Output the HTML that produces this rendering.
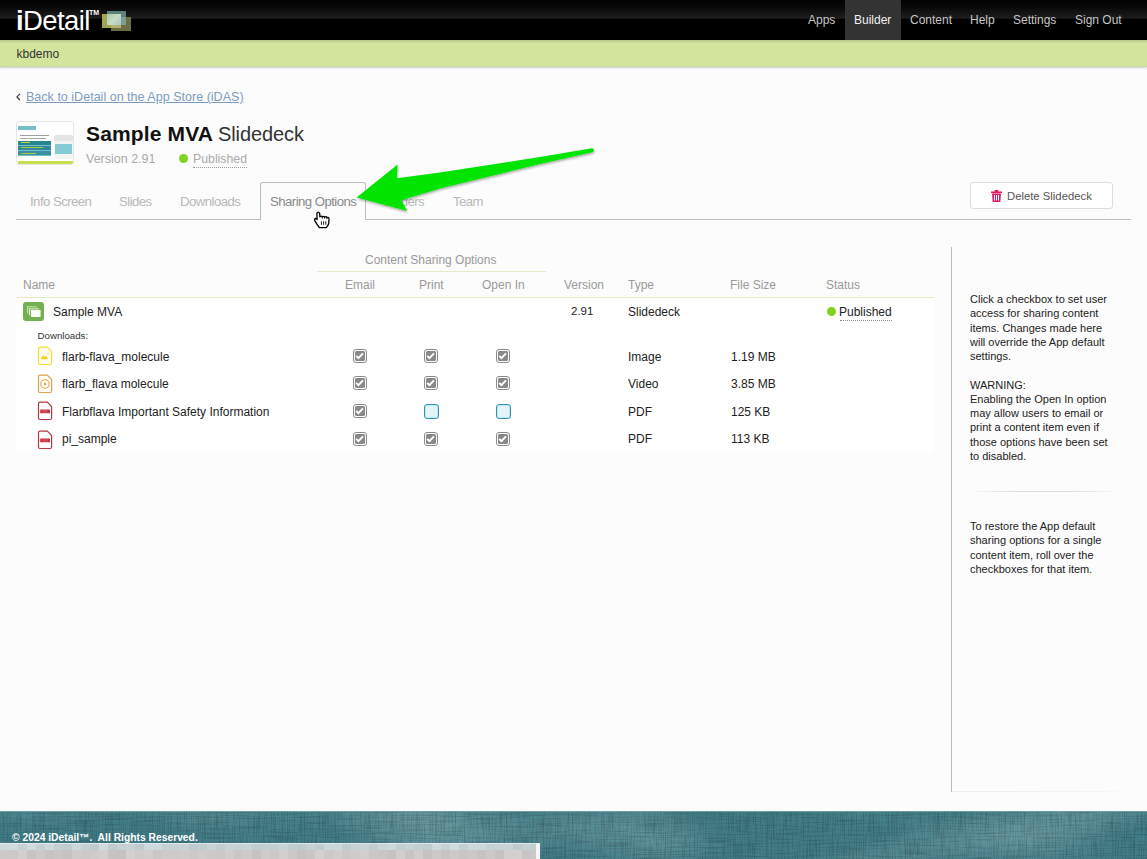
<!DOCTYPE html>
<html><head><meta charset="utf-8">
<style>
*{margin:0;padding:0;box-sizing:border-box}
html,body{width:1147px;height:859px;overflow:hidden}
body{position:relative;background:#fcfcfc;font-family:"Liberation Sans",sans-serif;color:#222}
.a{position:absolute}
.t{position:absolute;white-space:nowrap;line-height:1;font-size:12px}
#hdr{left:0;top:0;width:1147px;height:40px;background:linear-gradient(#020202 0px,#0a0a0a 8px,#1d1d1d 18px,#000 19.5px,#000 40px)}
.nav{color:#c6c6c6;top:14px}
#green{left:0;top:40px;width:1147px;height:27px;background:linear-gradient(#b5c585 0px,#c8da95 2px,#d3e59d 4px,#d3e59d 25.5px,#c5d2a0 27px);box-shadow:0 1px 2px rgba(0,0,0,.18)}
.tab{color:#b8b8b8;top:195px;font-size:13.2px !important;letter-spacing:-0.55px}
.th{color:#9a9a9a;top:279px}
.cb{position:absolute;width:14px;height:14px}
.cb svg{position:absolute;left:0;top:0}
.cb::before{content:"";position:absolute;left:0;top:0;width:14px;height:14px;box-sizing:border-box;border:1.3px solid #8c8c8c;border-radius:3px;background:#fff}
.cbu{position:absolute;width:14.8px;height:14.8px;border:1.1px solid #3f8fab;border-radius:3px;background:#e3f5fb;box-shadow:inset 0 0 0 1px #b3ecfc}
.side{position:absolute;left:970px;font-size:11px;line-height:14.25px;color:#222;white-space:nowrap}
</style></head><body>

<!-- header -->
<div id="hdr" class="a"></div>
<div class="t" style="left:16px;top:6.5px;font-size:27.5px;color:#fff;letter-spacing:-0.6px"><b>i</b>Detail</div>
<div class="t" style="left:89px;top:9px;font-size:7px;font-weight:bold;color:#fff">TM</div>
<div class="a" style="left:101px;top:10px;width:31px;height:22px;filter:blur(0.5px)">
  <div class="a" style="left:5.5px;top:0.8px;width:19.6px;height:14.4px;background:#5f8079"></div>
  <div class="a" style="left:10.4px;top:6.5px;width:19.6px;height:14.6px;background:#6d6d45"></div>
  <div class="a" style="left:0.8px;top:3.6px;width:19.2px;height:14.4px;background:#a3a553"></div>
  <div class="a" style="left:5.5px;top:3.6px;width:14.5px;height:11.6px;background:linear-gradient(135deg,#a8c8b0,#c8dcc4 50%,#a8c8c0)"></div>
  <div class="a" style="left:20px;top:6.5px;width:5.1px;height:8.7px;background:#7c9c94"></div>
  <div class="a" style="left:10.4px;top:15.2px;width:9.6px;height:2.8px;background:#b4b470"></div>
</div>

<div class="a" style="left:845px;top:0;width:56px;height:40px;background:#333"></div>
<div class="t nav" style="left:808px">Apps</div>
<div class="t nav" style="left:854px;color:#f2f2f2">Builder</div>
<div class="t nav" style="left:910px">Content</div>
<div class="t nav" style="left:970px">Help</div>
<div class="t nav" style="left:1013px">Settings</div>
<div class="t nav" style="left:1075px">Sign Out</div>

<div id="green" class="a"></div>
<div class="t" style="left:16.5px;top:48px;color:#333">kbdemo</div>

<!-- back link -->
<svg class="a" style="left:15px;top:92px" width="8" height="10" viewBox="0 0 8 10"><path d="M4.9 1.8 L1.9 4.9 L4.9 8" fill="none" stroke="#333" stroke-width="1.15"/></svg>
<div class="t" style="left:26px;top:91px;font-size:12.55px;color:#7c9dbf;text-decoration:underline">Back to iDetail on the App Store (iDAS)</div>

<!-- title -->
<div class="a" style="left:16px;top:121px;width:58px;height:44px;border:1px solid #e6e6e6;border-radius:3px;background:#fff;overflow:hidden">
  <div class="a" style="left:1px;top:4px;width:18px;height:4px;background:#74c0c8"></div>
  <div class="a" style="left:3px;top:13px;width:29px;height:1.3px;background:#555;opacity:.55"></div>
  <div class="a" style="left:3px;top:15.6px;width:26px;height:1.3px;background:#555;opacity:.5"></div>
  <div class="a" style="left:1px;top:19px;width:33px;height:15px;background:#72bfcc"></div>
  <div class="a" style="left:1px;top:19px;width:33px;height:3.6px;background:#2a8593"></div>
  <div class="a" style="left:1px;top:24.2px;width:33px;height:3.4px;background:#31899a"></div>
  <div class="a" style="left:1px;top:29.4px;width:33px;height:3.6px;background:#3a90a2"></div>
  <div class="a" style="left:4px;top:20.2px;width:9px;height:1.2px;background:#b8d840"></div>
  <div class="a" style="left:4px;top:25.3px;width:22px;height:1.2px;background:#a8c840"></div>
  <div class="a" style="left:4px;top:30.6px;width:15px;height:1.2px;background:#a8c840"></div>
  <div class="a" style="left:37px;top:13px;width:19px;height:6px;background:#e4e4e4;border-radius:2px 2px 0 0"></div>
  <div class="a" style="left:37px;top:19px;width:19px;height:18px;background:#f2f4f4;border-radius:0 0 2px 2px"></div>
  <div class="a" style="left:38px;top:22px;width:17px;height:10px;background:#86cad3"></div>
  <div class="a" style="left:1px;top:39px;width:56px;height:3px;background:#c8e050"></div>
</div>
<div class="t" style="left:86px;top:123px;font-size:21px;font-weight:bold;color:#111;letter-spacing:0.15px">Sample MVA</div>
<div class="t" style="left:218px;top:124px;font-size:20px;color:#333;letter-spacing:-0.1px">Slidedeck</div>
<div class="t" style="left:86px;top:153px;font-size:12.5px;color:#aaa">Version 2.91</div>
<div class="a" style="left:179px;top:154px;width:9px;height:9px;border-radius:50%;background:#7ed321"></div>
<div class="t" style="left:193px;top:153px;font-size:12.3px;color:#aaa">Published</div>
<div class="a" style="left:193px;top:167px;width:54px;height:0;border-top:1px dotted #999"></div>

<!-- tabs -->
<div class="a" style="left:16px;top:219px;width:1115px;height:1px;background:#bdbdbd"></div>
<div class="a" style="left:260px;top:182px;width:106px;height:38px;border:1px solid #bdbdbd;border-bottom:none;border-radius:3px 3px 0 0;background:#fcfcfc"></div>
<div class="t tab" style="left:30px">Info Screen</div>
<div class="t tab" style="left:119px">Slides</div>
<div class="t tab" style="left:180px">Downloads</div>
<div class="t tab" style="left:270px;color:#8a8a8a">Sharing Options</div>
<div class="t tab" style="left:384px">Folders</div>
<div class="t tab" style="left:453px">Team</div>

<!-- delete button -->
<div class="a" style="left:970px;top:182px;width:143px;height:27px;border:1px solid #dcdcdc;border-radius:3px;background:#fff"></div>
<svg class="a" style="left:991px;top:190px" width="11" height="12" viewBox="0 0 11 12">
  <rect x="0" y="1.5" width="11" height="1.6" fill="#e5195e"/>
  <rect x="3.5" y="0" width="4" height="2" rx="0.8" fill="#e5195e"/>
  <path d="M1 3.5 H10 L9.3 12 H1.7 Z" fill="#e5195e"/>
  <rect x="3" y="5" width="1" height="5.5" fill="#fff"/>
  <rect x="5" y="5" width="1" height="5.5" fill="#fff"/>
  <rect x="7" y="5" width="1" height="5.5" fill="#fff"/>
</svg>
<div class="t" style="left:1007px;top:191px;font-size:11.3px;color:#555">Delete Slidedeck</div>

<!-- table -->
<div class="a" style="left:16px;top:297px;width:918px;height:155px;background:#fff"></div>
<div class="t" style="left:365px;top:254px;color:#9a9a9a">Content Sharing Options</div>
<div class="a" style="left:317px;top:271px;width:229px;height:1px;background:#e3eac5"></div>
<div class="t th" style="left:23px">Name</div>
<div class="t th" style="left:345px">Email</div>
<div class="t th" style="left:419px">Print</div>
<div class="t th" style="left:482px">Open In</div>
<div class="t th" style="left:564px">Version</div>
<div class="t th" style="left:628px">Type</div>
<div class="t th" style="left:730px">File Size</div>
<div class="t th" style="left:826px">Status</div>
<div class="a" style="left:16px;top:297px;width:918px;height:1px;background:#e3eac5"></div>

<!-- sample mva row -->
<svg class="a" style="left:23px;top:302px" width="21" height="19" viewBox="0 0 21 19">
  <rect x="0" y="0" width="21" height="19" rx="3" fill="#73b04f"/>
  <path d="M4.6 11.2 V4.8 H13.9" fill="none" stroke="#c4e4b0" stroke-width="1.1"/>
  <path d="M6.5 13.2 V6.7 H15.8" fill="none" stroke="#dcf2cc" stroke-width="1.1"/>
  <rect x="7.9" y="7.9" width="9.7" height="7.1" fill="#fbfff6"/>
</svg>
<div class="t" style="left:53px;top:306px">Sample MVA</div>
<div class="t" style="left:571px;top:306px;font-size:11.5px">2.91</div>
<div class="t" style="left:628px;top:306px">Slidedeck</div>
<div class="a" style="left:827px;top:307px;width:9px;height:9px;border-radius:50%;background:#7ed321"></div>
<div class="t" style="left:839px;top:306px">Published</div>
<div class="a" style="left:840px;top:320px;width:52px;height:0;border-top:1px dotted #888"></div>
<div class="t" style="left:37.5px;top:331px;font-size:9.7px;color:#333">Downloads:</div>

<!-- download rows -->
<svg class="a" style="left:37px;top:346px" width="16" height="20" viewBox="0 0 16 20">
  <path d="M1.5 2.7 Q1.5 1.2 3 1.2 H10.3 L14.6 5.5 V17 Q14.6 18.5 13.1 18.5 H3 Q1.5 18.5 1.5 17 Z" fill="#fffef4" stroke="#f3df2c" stroke-width="1.2"/>
  <path d="M3.6 13.2 L6.2 9 L7.7 10.8 L9 9.6 L11 13.2 Z" fill="#efd21c"/>
  <circle cx="11" cy="7.6" r="0.8" fill="#efd21c"/>
</svg>
<svg class="a" style="left:37px;top:374.4px" width="16" height="20" viewBox="0 0 16 20">
  <path d="M1.5 2.7 Q1.5 1.2 3 1.2 H10.3 L14.6 5.5 V17 Q14.6 18.5 13.1 18.5 H3 Q1.5 18.5 1.5 17 Z" fill="#fffdf8" stroke="#e2a04c" stroke-width="1.2"/>
  <circle cx="8" cy="10" r="4.2" fill="none" stroke="#e2a04c" stroke-width="1.1"/>
  <path d="M7 8.2 L9.8 10 L7 11.8 Z" fill="#e2a04c"/>
</svg>
<svg class="a" style="left:37px;top:401.4px" width="16" height="20" viewBox="0 0 16 20">
  <path d="M1.5 2.7 Q1.5 1.2 3 1.2 H10.3 L14.6 5.5 V17 Q14.6 18.5 13.1 18.5 H3 Q1.5 18.5 1.5 17 Z" fill="#fff" stroke="#b73744" stroke-width="1.2"/>
  <rect x="3.2" y="8.6" width="9.8" height="3.6" rx="0.5" fill="#c9303e"/>
  <path d="M5.3 9.8 H10.8 M5.3 11.1 H10.8" stroke="#e07a84" stroke-width="0.5"/>
</svg>
<svg class="a" style="left:37px;top:429.6px" width="16" height="20" viewBox="0 0 16 20">
  <path d="M1.5 2.7 Q1.5 1.2 3 1.2 H10.3 L14.6 5.5 V17 Q14.6 18.5 13.1 18.5 H3 Q1.5 18.5 1.5 17 Z" fill="#fff" stroke="#b73744" stroke-width="1.2"/>
  <rect x="3.2" y="8.6" width="9.8" height="3.6" rx="0.5" fill="#c9303e"/>
  <path d="M5.3 9.8 H10.8 M5.3 11.1 H10.8" stroke="#e07a84" stroke-width="0.5"/>
</svg>

<div class="t" style="left:62px;top:351px">flarb-flava_molecule</div>
<div class="t" style="left:62px;top:378px">flarb_flava molecule</div>
<div class="t" style="left:62px;top:406px">Flarbflava Important Safety Information</div>
<div class="t" style="left:62px;top:433px">pi_sample</div>

<div class="t" style="left:628px;top:351px">Image</div>
<div class="t" style="left:628px;top:378px">Video</div>
<div class="t" style="left:628px;top:406px">PDF</div>
<div class="t" style="left:628px;top:433px">PDF</div>
<div class="t" style="left:731px;top:351px">1.19 MB</div>
<div class="t" style="left:731px;top:378px">3.85 MB</div>
<div class="t" style="left:731px;top:406px">125 KB</div>
<div class="t" style="left:731px;top:433px">113 KB</div>

<!-- checkboxes -->
<div class="cb" style="left:353.2px;top:349.1px"><svg width="14" height="14" viewBox="0 0 14 14"><rect x="1.95" y="1.95" width="10.1" height="10.1" rx="1.6" fill="#8a8a8a"/><path d="M3.2 6.9 L5.4 9.1 L10 4.4" fill="none" stroke="#fff" stroke-width="1.9"/></svg></div>
<div class="cb" style="left:424.3px;top:349.1px"><svg width="14" height="14" viewBox="0 0 14 14"><rect x="1.95" y="1.95" width="10.1" height="10.1" rx="1.6" fill="#8a8a8a"/><path d="M3.2 6.9 L5.4 9.1 L10 4.4" fill="none" stroke="#fff" stroke-width="1.9"/></svg></div>
<div class="cb" style="left:496.2px;top:349.1px"><svg width="14" height="14" viewBox="0 0 14 14"><rect x="1.95" y="1.95" width="10.1" height="10.1" rx="1.6" fill="#8a8a8a"/><path d="M3.2 6.9 L5.4 9.1 L10 4.4" fill="none" stroke="#fff" stroke-width="1.9"/></svg></div>
<div class="cb" style="left:353.2px;top:376.1px"><svg width="14" height="14" viewBox="0 0 14 14"><rect x="1.95" y="1.95" width="10.1" height="10.1" rx="1.6" fill="#8a8a8a"/><path d="M3.2 6.9 L5.4 9.1 L10 4.4" fill="none" stroke="#fff" stroke-width="1.9"/></svg></div>
<div class="cb" style="left:424.3px;top:376.1px"><svg width="14" height="14" viewBox="0 0 14 14"><rect x="1.95" y="1.95" width="10.1" height="10.1" rx="1.6" fill="#8a8a8a"/><path d="M3.2 6.9 L5.4 9.1 L10 4.4" fill="none" stroke="#fff" stroke-width="1.9"/></svg></div>
<div class="cb" style="left:496.2px;top:376.1px"><svg width="14" height="14" viewBox="0 0 14 14"><rect x="1.95" y="1.95" width="10.1" height="10.1" rx="1.6" fill="#8a8a8a"/><path d="M3.2 6.9 L5.4 9.1 L10 4.4" fill="none" stroke="#fff" stroke-width="1.9"/></svg></div>
<div class="cb" style="left:353.2px;top:404.0px"><svg width="14" height="14" viewBox="0 0 14 14"><rect x="1.95" y="1.95" width="10.1" height="10.1" rx="1.6" fill="#8a8a8a"/><path d="M3.2 6.9 L5.4 9.1 L10 4.4" fill="none" stroke="#fff" stroke-width="1.9"/></svg></div>
<div class="cbu" style="left:424.3px;top:404.0px"></div>
<div class="cbu" style="left:496.2px;top:404.0px"></div>
<div class="cb" style="left:353.2px;top:432.1px"><svg width="14" height="14" viewBox="0 0 14 14"><rect x="1.95" y="1.95" width="10.1" height="10.1" rx="1.6" fill="#8a8a8a"/><path d="M3.2 6.9 L5.4 9.1 L10 4.4" fill="none" stroke="#fff" stroke-width="1.9"/></svg></div>
<div class="cb" style="left:424.3px;top:432.1px"><svg width="14" height="14" viewBox="0 0 14 14"><rect x="1.95" y="1.95" width="10.1" height="10.1" rx="1.6" fill="#8a8a8a"/><path d="M3.2 6.9 L5.4 9.1 L10 4.4" fill="none" stroke="#fff" stroke-width="1.9"/></svg></div>
<div class="cb" style="left:496.2px;top:432.1px"><svg width="14" height="14" viewBox="0 0 14 14"><rect x="1.95" y="1.95" width="10.1" height="10.1" rx="1.6" fill="#8a8a8a"/><path d="M3.2 6.9 L5.4 9.1 L10 4.4" fill="none" stroke="#fff" stroke-width="1.9"/></svg></div>

<!-- sidebar -->
<div class="a" style="left:951px;top:247px;width:1px;height:545px;background:#bdbdbd"></div>
<div class="a" style="left:952px;top:791px;width:180px;height:1px;background:linear-gradient(90deg,#eee,#f4f4f4 80%,rgba(250,250,250,0))"></div>
<div class="side" style="top:292px">Click a checkbox to set user<br>access for sharing content<br>items. Changes made here<br>will override the App default<br>settings.<br><br>WARNING:<br>Enabling the Open In option<br>may allow users to email or<br>print a content item even if<br>those options have been set<br>to disabled.</div>
<div class="a" style="left:968px;top:491px;width:152px;height:1px;background:linear-gradient(90deg,rgba(220,220,220,0),#dedede 30%,#dedede 70%,rgba(220,220,220,0))"></div>
<div class="side" style="top:519px">To restore the App default<br>sharing options for a single<br>content item, roll over the<br>checkboxes for that item.</div>

<!-- arrow -->
<svg class="a" style="left:0;top:0" width="1147" height="300" viewBox="0 0 1147 300">
  <defs><filter id="sh" x="-10%" y="-30%" width="120%" height="160%"><feDropShadow dx="0.5" dy="1.5" stdDeviation="1.2" flood-color="#000" flood-opacity="0.35"/></filter></defs>
  <path d="M356.7 197.4 L397.6 164.6 L397 178.3 L440 172.6 L540 157 L592 148.3 Q595.8 149.8 592.4 152.2 L540 164 L440 188.6 L401.4 200.3 L407.2 210.9 Z" fill="#00e400" filter="url(#sh)"/>
</svg>

<!-- cursor -->
<svg class="a" style="left:312px;top:210px" width="20" height="20" viewBox="0 0 20 20">
  <path d="M4.9 3.4 Q6.2 0.9 7.7 3.4 L7.8 6.8 Q9.3 5.4 10.3 6.9 Q11.7 5.7 12.6 7.1 Q14.3 6.1 14.9 7.5 Q16.9 6.9 17 8.7 L16.7 13.5 Q16 16 14.3 17.6 L7.4 17.6 Q5 14.5 2.7 10.6 Q2.1 8.9 3.6 8.5 Q4.6 8.4 5.1 9.6 Z" fill="#fff" stroke="#000" stroke-width="1.3" stroke-linejoin="round"/>
  <path d="M9.4 11.3 V14.8 M11.6 11.3 V14.8 M13.8 11.3 V14.8" stroke="#000" stroke-width="0.9"/>
  <path d="M10.3 6.9 V8.6 M12.6 7.1 V8.6 M14.9 7.5 V9" stroke="#000" stroke-width="0.9"/>
</svg>

<!-- footer -->
<svg class="a" style="left:0;top:811px" width="1147" height="48" viewBox="0 0 1147 48">
  <defs>
    <filter id="lin1" x="0" y="0" width="100%" height="100%"><feTurbulence type="fractalNoise" baseFrequency="0.9 0.04" numOctaves="2" seed="4"/><feColorMatrix type="matrix" values="0 0 0 0 0  0 0 0 0 0  0 0 0 0 0  0.42 0 0 0 -0.17"/></filter>
    <filter id="lin2" x="0" y="0" width="100%" height="100%"><feTurbulence type="fractalNoise" baseFrequency="0.03 0.9" numOctaves="2" seed="9"/><feColorMatrix type="matrix" values="0 0 0 0 0  0 0 0 0 0  0 0 0 0 0  0.38 0 0 0 -0.16"/></filter>
    <filter id="lin3" x="0" y="0" width="100%" height="100%"><feTurbulence type="fractalNoise" baseFrequency="0.006 0.02" numOctaves="1" seed="2"/><feColorMatrix type="matrix" values="0 0 0 0 1  0 0 0 0 1  0 0 0 0 1  0.6 0 0 0 -0.25"/></filter>
  </defs>
  <rect x="0" y="0" width="1147" height="48" fill="#427f89"/>
  <rect x="0" y="0" width="1147" height="48" filter="url(#lin3)"/>
  <rect x="0" y="0" width="1147" height="48" filter="url(#lin1)"/>
  <rect x="0" y="0" width="1147" height="48" filter="url(#lin2)"/>
  <rect x="0" y="0" width="1147" height="1" fill="#6a9ea6"/>
</svg>
<div class="t" style="left:12px;top:832.5px;font-size:10.3px;font-weight:bold;color:#fff">&copy; 2024 iDetail&trade;.&nbsp; All Rights Reserved.</div>
<svg class="a" style="left:0;top:843px" width="540" height="16" viewBox="0 0 540 16">
<rect x="0" y="7" width="9" height="9" fill="rgb(205,201,201)"/>
<rect x="0" y="0" width="9" height="7" fill="rgb(206,217,219)"/>
<rect x="9" y="7" width="9" height="9" fill="rgb(205,201,201)"/>
<rect x="9" y="0" width="9" height="7" fill="rgb(208,219,221)"/>
<rect x="18" y="7" width="9" height="9" fill="rgb(211,207,207)"/>
<rect x="18" y="0" width="9" height="7" fill="rgb(198,209,211)"/>
<rect x="27" y="7" width="9" height="9" fill="rgb(200,196,196)"/>
<rect x="27" y="0" width="9" height="7" fill="rgb(208,219,221)"/>
<rect x="36" y="7" width="9" height="9" fill="rgb(205,201,201)"/>
<rect x="36" y="0" width="9" height="7" fill="rgb(197,208,210)"/>
<rect x="45" y="7" width="9" height="9" fill="rgb(199,195,195)"/>
<rect x="45" y="0" width="9" height="7" fill="rgb(206,217,219)"/>
<rect x="54" y="7" width="9" height="9" fill="rgb(202,198,198)"/>
<rect x="54" y="0" width="9" height="7" fill="rgb(196,207,209)"/>
<rect x="63" y="7" width="9" height="9" fill="rgb(199,195,195)"/>
<rect x="63" y="0" width="9" height="7" fill="rgb(193,204,206)"/>
<rect x="72" y="7" width="9" height="9" fill="rgb(207,203,203)"/>
<rect x="72" y="0" width="9" height="7" fill="rgb(204,215,217)"/>
<rect x="81" y="7" width="9" height="9" fill="rgb(205,201,201)"/>
<rect x="81" y="0" width="9" height="7" fill="rgb(197,208,210)"/>
<rect x="90" y="7" width="9" height="9" fill="rgb(207,203,203)"/>
<rect x="90" y="0" width="9" height="7" fill="rgb(192,203,205)"/>
<rect x="99" y="7" width="9" height="9" fill="rgb(211,207,207)"/>
<rect x="99" y="0" width="9" height="7" fill="rgb(208,219,221)"/>
<rect x="108" y="7" width="9" height="9" fill="rgb(199,195,195)"/>
<rect x="108" y="0" width="9" height="7" fill="rgb(193,204,206)"/>
<rect x="117" y="7" width="9" height="9" fill="rgb(198,194,194)"/>
<rect x="117" y="0" width="9" height="7" fill="rgb(198,209,211)"/>
<rect x="126" y="7" width="9" height="9" fill="rgb(212,208,208)"/>
<rect x="126" y="0" width="9" height="7" fill="rgb(199,210,212)"/>
<rect x="135" y="7" width="9" height="9" fill="rgb(207,203,203)"/>
<rect x="135" y="0" width="9" height="7" fill="rgb(192,203,205)"/>
<rect x="144" y="7" width="9" height="9" fill="rgb(210,206,206)"/>
<rect x="144" y="0" width="9" height="7" fill="rgb(206,217,219)"/>
<rect x="153" y="7" width="9" height="9" fill="rgb(203,199,199)"/>
<rect x="153" y="0" width="9" height="7" fill="rgb(206,217,219)"/>
<rect x="162" y="7" width="9" height="9" fill="rgb(207,203,203)"/>
<rect x="162" y="0" width="9" height="7" fill="rgb(198,209,211)"/>
<rect x="171" y="7" width="9" height="9" fill="rgb(206,202,202)"/>
<rect x="171" y="0" width="9" height="7" fill="rgb(199,210,212)"/>
<rect x="180" y="7" width="9" height="9" fill="rgb(208,204,204)"/>
<rect x="180" y="0" width="9" height="7" fill="rgb(201,212,214)"/>
<rect x="189" y="7" width="9" height="9" fill="rgb(205,201,201)"/>
<rect x="189" y="0" width="9" height="7" fill="rgb(192,203,205)"/>
<rect x="198" y="7" width="9" height="9" fill="rgb(208,204,204)"/>
<rect x="198" y="0" width="9" height="7" fill="rgb(194,205,207)"/>
<rect x="207" y="7" width="9" height="9" fill="rgb(205,201,201)"/>
<rect x="207" y="0" width="9" height="7" fill="rgb(200,211,213)"/>
<rect x="216" y="7" width="9" height="9" fill="rgb(204,200,200)"/>
<rect x="216" y="0" width="9" height="7" fill="rgb(194,205,207)"/>
<rect x="225" y="7" width="9" height="9" fill="rgb(209,205,205)"/>
<rect x="225" y="0" width="9" height="7" fill="rgb(200,211,213)"/>
<rect x="234" y="7" width="9" height="9" fill="rgb(203,199,199)"/>
<rect x="234" y="0" width="9" height="7" fill="rgb(199,210,212)"/>
<rect x="243" y="7" width="9" height="9" fill="rgb(206,202,202)"/>
<rect x="243" y="0" width="9" height="7" fill="rgb(201,212,214)"/>
<rect x="252" y="7" width="9" height="9" fill="rgb(198,194,194)"/>
<rect x="252" y="0" width="9" height="7" fill="rgb(194,205,207)"/>
<rect x="261" y="7" width="9" height="9" fill="rgb(207,203,203)"/>
<rect x="261" y="0" width="9" height="7" fill="rgb(195,206,208)"/>
<rect x="270" y="7" width="9" height="9" fill="rgb(204,200,200)"/>
<rect x="270" y="0" width="9" height="7" fill="rgb(195,206,208)"/>
<rect x="279" y="7" width="9" height="9" fill="rgb(211,207,207)"/>
<rect x="279" y="0" width="9" height="7" fill="rgb(201,212,214)"/>
<rect x="288" y="7" width="9" height="9" fill="rgb(204,200,200)"/>
<rect x="288" y="0" width="9" height="7" fill="rgb(194,205,207)"/>
<rect x="297" y="7" width="9" height="9" fill="rgb(198,194,194)"/>
<rect x="297" y="0" width="9" height="7" fill="rgb(192,203,205)"/>
<rect x="306" y="7" width="9" height="9" fill="rgb(201,197,197)"/>
<rect x="306" y="0" width="9" height="7" fill="rgb(198,209,211)"/>
<rect x="315" y="7" width="9" height="9" fill="rgb(212,208,208)"/>
<rect x="315" y="0" width="9" height="7" fill="rgb(193,204,206)"/>
<rect x="324" y="7" width="9" height="9" fill="rgb(205,201,201)"/>
<rect x="324" y="0" width="9" height="7" fill="rgb(204,215,217)"/>
<rect x="333" y="7" width="9" height="9" fill="rgb(209,205,205)"/>
<rect x="333" y="0" width="9" height="7" fill="rgb(204,215,217)"/>
<rect x="342" y="7" width="9" height="9" fill="rgb(204,200,200)"/>
<rect x="342" y="0" width="9" height="7" fill="rgb(194,205,207)"/>
<rect x="351" y="7" width="9" height="9" fill="rgb(207,203,203)"/>
<rect x="351" y="0" width="9" height="7" fill="rgb(198,209,211)"/>
<rect x="360" y="7" width="9" height="9" fill="rgb(210,206,206)"/>
<rect x="360" y="0" width="9" height="7" fill="rgb(200,211,213)"/>
<rect x="369" y="7" width="9" height="9" fill="rgb(203,199,199)"/>
<rect x="369" y="0" width="9" height="7" fill="rgb(194,205,207)"/>
<rect x="378" y="7" width="9" height="9" fill="rgb(202,198,198)"/>
<rect x="378" y="0" width="9" height="7" fill="rgb(202,213,215)"/>
<rect x="387" y="7" width="9" height="9" fill="rgb(198,194,194)"/>
<rect x="387" y="0" width="9" height="7" fill="rgb(205,216,218)"/>
<rect x="396" y="7" width="9" height="9" fill="rgb(210,206,206)"/>
<rect x="396" y="0" width="9" height="7" fill="rgb(195,206,208)"/>
<rect x="405" y="7" width="9" height="9" fill="rgb(200,196,196)"/>
<rect x="405" y="0" width="9" height="7" fill="rgb(199,210,212)"/>
<rect x="414" y="7" width="9" height="9" fill="rgb(209,205,205)"/>
<rect x="414" y="0" width="9" height="7" fill="rgb(195,206,208)"/>
<rect x="423" y="7" width="9" height="9" fill="rgb(198,194,194)"/>
<rect x="423" y="0" width="9" height="7" fill="rgb(193,204,206)"/>
<rect x="432" y="7" width="9" height="9" fill="rgb(205,201,201)"/>
<rect x="432" y="0" width="9" height="7" fill="rgb(207,218,220)"/>
<rect x="441" y="7" width="9" height="9" fill="rgb(200,196,196)"/>
<rect x="441" y="0" width="9" height="7" fill="rgb(198,209,211)"/>
<rect x="450" y="7" width="9" height="9" fill="rgb(205,201,201)"/>
<rect x="450" y="0" width="9" height="7" fill="rgb(208,219,221)"/>
<rect x="459" y="7" width="9" height="9" fill="rgb(201,197,197)"/>
<rect x="459" y="0" width="9" height="7" fill="rgb(196,207,209)"/>
<rect x="468" y="7" width="9" height="9" fill="rgb(204,200,200)"/>
<rect x="468" y="0" width="9" height="7" fill="rgb(204,215,217)"/>
<rect x="477" y="7" width="9" height="9" fill="rgb(199,195,195)"/>
<rect x="477" y="0" width="9" height="7" fill="rgb(204,215,217)"/>
<rect x="486" y="7" width="9" height="9" fill="rgb(204,200,200)"/>
<rect x="486" y="0" width="9" height="7" fill="rgb(198,209,211)"/>
<rect x="495" y="7" width="9" height="9" fill="rgb(198,194,194)"/>
<rect x="495" y="0" width="9" height="7" fill="rgb(200,211,213)"/>
<rect x="504" y="7" width="9" height="9" fill="rgb(211,207,207)"/>
<rect x="504" y="0" width="9" height="7" fill="rgb(201,212,214)"/>
<rect x="513" y="7" width="9" height="9" fill="rgb(212,208,208)"/>
<rect x="513" y="0" width="9" height="7" fill="rgb(192,203,205)"/>
<rect x="522" y="7" width="9" height="9" fill="rgb(201,197,197)"/>
<rect x="522" y="0" width="9" height="7" fill="rgb(197,208,210)"/>
<rect x="531" y="7" width="9" height="9" fill="rgb(204,200,200)"/>
<rect x="531" y="0" width="9" height="7" fill="rgb(195,206,208)"/>
  <rect x="536" y="0" width="4" height="16" fill="#f4f6f6"/>
  <rect x="0" y="0" width="540" height="0.8" fill="#e6f0f0"/>
</svg>
</body></html>
